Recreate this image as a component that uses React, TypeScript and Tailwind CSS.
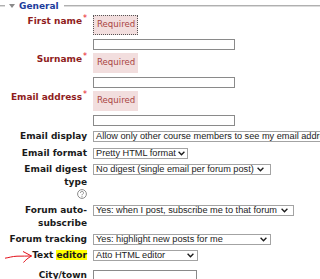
const lbl = "w-[88px] shrink-0 pr-px text-right text-[9px] font-bold leading-[13px] text-[#1a1a1a]";
const reqLbl = "w-[88px] shrink-0 pr-px text-right text-[9px] font-bold leading-[13px] text-[#8f1d1d]";
const sel =
  "ml-[5px] flex h-[11px] shrink-0 items-center justify-between border border-[#a3a3a3] bg-white pl-[2px] font-['Liberation_Sans',Arial,sans-serif] text-[9.2px] leading-[9px] text-[#222] whitespace-nowrap";

function Chevron() {
  return (
    <svg width="7" height="5" viewBox="0 0 7 5" className="shrink-0">
      <path d="M0.6 0.8 L3.5 3.8 L6.4 0.8" fill="none" stroke="#1a1a1a" strokeWidth="1.3" />
    </svg>
  );
}

function Star() {
  return <span className="relative -top-[3px] ml-px text-[8px] font-normal text-[#e8141b]">*</span>;
}

function RequiredRow({ label, focus }: { label: string; focus?: boolean }) {
  return (
    <div className="flex items-start">
      <div className={reqLbl}>
        {label}
        <Star />
      </div>
      <div
        className={
          "ml-[5px] h-[20px] bg-[#f2dede] pl-[4px] pr-[3px] pt-[4px] text-[8.6px] leading-[11px] text-[#a94442] " +
          (focus ? "outline outline-1 outline-dotted outline-[#555] -outline-offset-1" : "")
        }
      >
        Required
      </div>
    </div>
  );
}

function HelpIcon() {
  return (
    <svg width="10" height="10" viewBox="0 0 10 10">
      <circle cx="5" cy="5" r="4.4" fill="none" stroke="#8c8c8c" strokeWidth="1" />
      <path d="M3.5 3.9 A1.5 1.5 0 1 1 5.6 5.2 C5.1 5.5 5 5.8 5 6.3" fill="none" stroke="#8c8c8c" strokeWidth="1" />
      <circle cx="5" cy="7.7" r="0.6" fill="#8c8c8c" />
    </svg>
  );
}

export default function App() {
  return (
    <div className="h-[279px] w-[320px] overflow-hidden bg-white font-['DejaVu_Sans',Verdana,sans-serif]">
      {/* fieldset legend */}
      <div className="flex h-[11px] items-start">
        <div className="mt-[5px] h-[2px] w-[5px] border-t border-b border-t-[#b0b0b0] border-b-[#dcdcdc]" />
        <svg width="6" height="4" viewBox="0 0 6 4" className="ml-[4px] mt-[4px]">
          <polygon points="0,0 6,0 3,4" fill="#8a8a8a" />
        </svg>
        <span className="ml-[4px] mt-px text-[9px] font-bold leading-[11px] text-[#1c3c9c]">General</span>
        <div className="ml-[5px] mt-[5px] h-[2px] flex-1 border-t border-b border-t-[#b0b0b0] border-b-[#dcdcdc]" />
      </div>

      <div className="mt-[4px]">
        <RequiredRow label="First name" focus />
      </div>
      <div className="ml-[93px] mt-[4px] h-[11px] w-[142px] border border-[#8a8a8a]" />
      <div className="mt-[3px]">
        <RequiredRow label="Surname" />
      </div>
      <div className="ml-[93px] mt-[4px] h-[11px] w-[142px] border border-[#8a8a8a]" />
      <div className="mt-[3px]">
        <RequiredRow label="Email address" />
      </div>
      <div className="ml-[93px] mt-[4px] h-[11px] w-[142px] border border-[#8a8a8a]" />

      <div className="mt-[5px] flex items-start">
        <div className={lbl + " -mt-px"}>Email display</div>
        <div className={sel + " w-[280px] pr-[4px]"}>
          Allow only other course members to see my email address
          <Chevron />
        </div>
      </div>

      <div className="mt-[5px] flex items-start">
        <div className={lbl + " -mt-px"}>Email format</div>
        <div className={sel + " w-[95px] pr-[2px]"}>
          Pretty HTML format
          <Chevron />
        </div>
      </div>

      <div className="mt-[4px] flex items-start">
        <div className={lbl + " -mt-px"}>
          Email digest
          <br />
          type
          <div className="flex justify-end">
            <HelpIcon />
          </div>
        </div>
        <div className={sel + " w-[178px] pr-[6px]"}>
          No digest (single email per forum post)
          <Chevron />
        </div>
      </div>

      <div className="mt-[6px] flex items-start">
        <div className={lbl + " -mt-px"}>
          Forum auto-
          <br />
          subscribe
        </div>
        <div className={sel + " w-[201px] pr-[5px]"}>
          Yes: when I post, subscribe me to that forum
          <Chevron />
        </div>
      </div>

      <div className="mt-[4px] flex items-start">
        <div className={lbl + " -mt-px"}>Forum tracking</div>
        <div className={sel + " w-[178px] pr-[3px]"}>
          Yes: highlight new posts for me
          <Chevron />
        </div>
      </div>

      <div className="mt-[4px] flex items-start">
        <div className={lbl + " -mt-px flex items-start justify-end pr-0"}>
          <svg width="30" height="16" viewBox="0 0 30 16" className="shrink-0">
            <path d="M3 9.2 C7 8.6 10 7.4 15 7.2 S25 7.2 29.5 7" fill="none" stroke="#e3101a" strokeWidth="1" />
            <path d="M21 2.5 L29.5 7 C26 9 23.5 11 21.5 13.5" fill="none" stroke="#e3101a" strokeWidth="1" />
          </svg>
          <span className="whitespace-nowrap">
            Text <span className="bg-[#ffff00]">editor</span>
          </span>
        </div>
        <div className={sel + " w-[105px] pr-[3px]"}>
          Atto HTML editor
          <Chevron />
        </div>
      </div>

      <div className="mt-[5px] flex items-start">
        <div className={lbl + " -mt-px"}>City/town</div>
        <div className="ml-[5px] h-[11px] w-[104px] shrink-0 border border-[#8a8a8a]" />
      </div>
    </div>
  );
}
